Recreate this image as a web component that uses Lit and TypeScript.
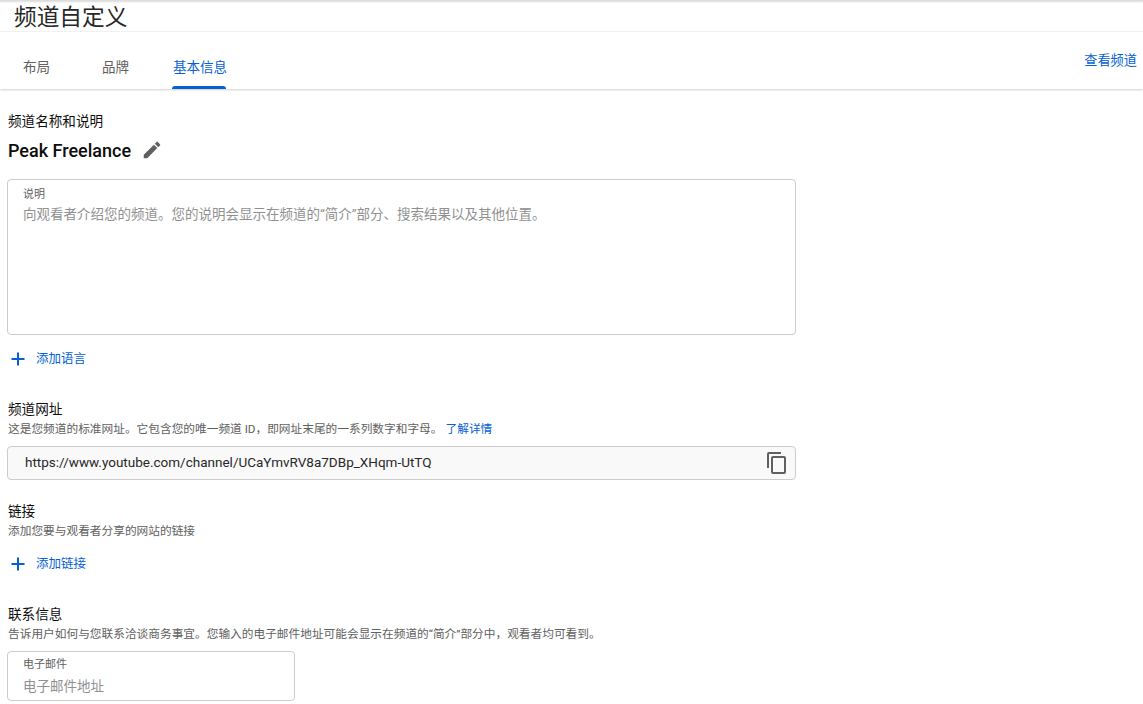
import { LitElement, html, css } from "lit";
import { customElement } from "lit/decorators.js";

const plus = html`<svg class="plus" viewBox="0 0 20 20" width="20" height="20"><path d="M9 3.500h2V9h5.500v2H11v5.500H9V11H3.500V9H9z" fill="#065fd4"/></svg>`;

@customElement("app-root")
export class AppRoot extends LitElement {
  static styles = css`
    :host {
      display: block;
      width: 1143px;
      height: 704px;
      overflow: hidden;
      background: #fff;
      font-family: Roboto, "Noto Sans CJK SC", sans-serif;
      color: #0d0d0d;
    }
    .top {
      height: 32px;
      border-bottom: 1px solid #f4f4f4;
      box-sizing: border-box;
      padding-left: 14px;
      font-size: 22.700px;
      line-height: 35px;
      color: #282828;
      box-shadow: inset 0 3px 2px -1px #dcdcdc;
      overflow: hidden;
    }
    .tabsbar {
      height: 57px;
      display: flex;
      align-items: flex-start;
      justify-content: space-between;
      box-shadow: 0 1px 2px #cfcfcf;
      position: relative;
    }
    .tabs { display: flex; gap: 52px; padding-left: 23px; }
    .tab {
      height: 57px;
      box-sizing: border-box;
      padding-top: 25px;
      font-size: 13.500px;
      line-height: 20px;
      color: #606060;
      width: 27px;
      white-space: nowrap;
      position: relative;
    }
    .tab.active { color: #065fd4; width: 54px; margin-left: -9px; padding-left: 1px; }
    .tab.active::after {
      content: "";
      position: absolute;
      left: 0;
      right: 0;
      bottom: 0;
      height: 3px;
      border-radius: 3px 3px 0 0;
      background: #065fd4;
    }
    .view {
      font-size: 13.200px;
      line-height: 20px;
      color: #065fd4;
      margin: 19px 6px 0 0;
    }
    main { padding: 22px 0 0 7px; }
    .h { font-size: 13.600px; line-height: 20px; color: #0d0d0d; padding-left: 1px; }
    .name {
      display: flex;
      align-items: center;
      gap: 10px;
      margin-top: 7px;
      height: 24px;
      padding-left: 1px;
      font-size: 18px;
      font-weight: 500;
      color: #0d0d0d;
    }
    .box {
      box-sizing: border-box;
      border: 1px solid #ccc;
      border-radius: 4px;
      padding: 5px 15px 0;
    }
    .desc { width: 789px; height: 156px; margin-top: 17px; padding-top: 7px; }
    .lbl { font-size: 11px; line-height: 16px; color: #606060; }
    .ph { font-size: 13.500px; line-height: 20px; color: #909090; white-space: nowrap; }
    .desc .ph { margin-top: 1px; }
    .add {
      display: flex;
      align-items: center;
      gap: 8px;
      height: 20px;
      padding-left: 1px;
      font-size: 12.500px;
      line-height: 20px;
      color: #065fd4;
    }
    .add.lang { margin-top: 14px; }
    .sub { font-size: 11.700px; line-height: 16px; color: #606060; padding-left: 1px; white-space: nowrap; }
    .sub a { color: #065fd4; margin-left: 3px; }
    .url-sub { margin-top: 2px; }
    .url-h { margin-top: 30px; }
    .url {
      width: 789px;
      height: 34px;
      margin-top: 9px;
      padding: 0 6px 2px 17px;
      background: #f9f9f9;
      display: flex;
      align-items: center;
      justify-content: space-between;
      font-size: 13.500px;
      color: #282828;
    }
    .url svg { margin-top: 2px; }
    .links-h { margin-top: 21px; }
    .links-sub { margin-top: 2px; }
    .add.link { margin-top: 15px; }
    .contact-h { margin-top: 30px; }
    .contact-sub { margin-top: 2px; }
    .email { width: 288px; height: 50px; margin-top: 9px; padding-top: 5px; }
    .email .ph { margin-top: 3px; }
  `;

  render() {
    return html`
      <div class="top">频道自定义</div>
      <div class="tabsbar">
        <div class="tabs">
          <div class="tab">布局</div>
          <div class="tab">品牌</div>
          <div class="tab active">基本信息</div>
        </div>
        <div class="view">查看频道</div>
      </div>
      <main>
        <div class="h">频道名称和说明</div>
        <div class="name">
          <span>Peak Freelance</span>
          <svg viewBox="0 0 24 24" width="22" height="22"><path fill="#606060" d="M3 17.25V21h3.75L17.81 9.94l-3.75-3.75L3 17.25zM20.71 7.04a1 1 0 0 0 0-1.41l-2.34-2.34a1 1 0 0 0-1.41 0l-1.83 1.83 3.75 3.75 1.83-1.83z"/></svg>
        </div>
        <div class="box desc">
          <div class="lbl">说明</div>
          <div class="ph">向观看者介绍您的频道。您的说明会显示在频道的“简介”部分、搜索结果以及其他位置。</div>
        </div>
        <div class="add lang">${plus}<span>添加语言</span></div>

        <div class="h url-h">频道网址</div>
        <div class="sub url-sub">这是您频道的标准网址。它包含您的唯一频道 ID，即网址末尾的一系列数字和字母。<a>了解详情</a></div>
        <div class="box url">
          <span>https://www.youtube.com/channel/UCaYmvRV8a7DBp_XHqm-UtTQ</span>
          <svg viewBox="0 0 24 24" width="24" height="24"><path fill="#606060" d="M16 1H4a2 2 0 0 0-2 2v14h2V3h12V1zm3 4H8a2 2 0 0 0-2 2v14a2 2 0 0 0 2 2h11a2 2 0 0 0 2-2V7a2 2 0 0 0-2-2zm0 16H8V7h11v14z"/></svg>
        </div>

        <div class="h links-h">链接</div>
        <div class="sub links-sub">添加您要与观看者分享的网站的链接</div>
        <div class="add link">${plus}<span>添加链接</span></div>

        <div class="h contact-h">联系信息</div>
        <div class="sub contact-sub">告诉用户如何与您联系洽谈商务事宜。您输入的电子邮件地址可能会显示在频道的“简介”部分中，观看者均可看到。</div>
        <div class="box email">
          <div class="lbl">电子邮件</div>
          <div class="ph">电子邮件地址</div>
        </div>
      </main>
    `;
  }
}
